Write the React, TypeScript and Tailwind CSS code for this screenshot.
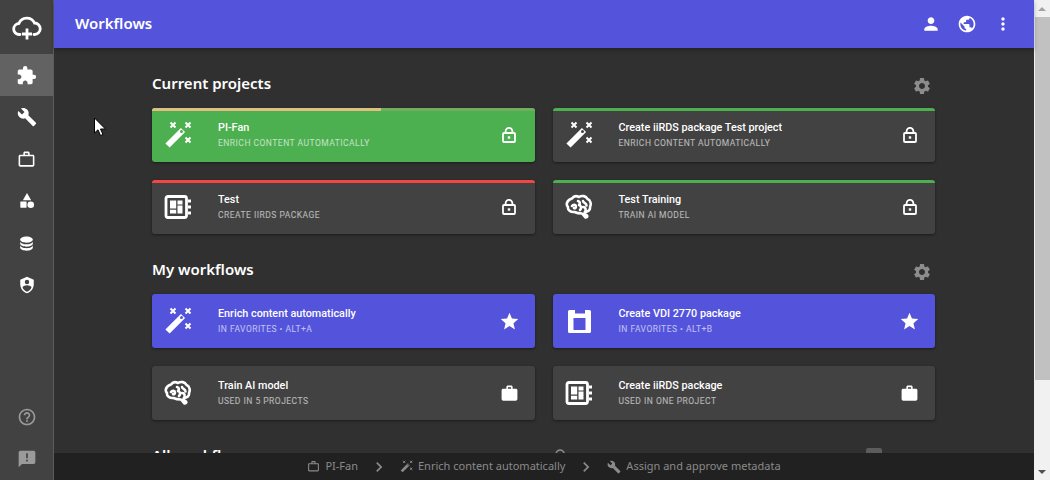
import React from 'react';
import {
  MdExtension, MdBuild, MdWorkOutline, MdWork, MdStar, MdSettings, MdPerson,
  MdPublic, MdMoreVert, MdHelpOutline, MdAnnouncement, MdChevronRight, MdSearch,
} from 'react-icons/md';

const CloudLogo = () => (
  <svg width="30" height="25" viewBox="0 0 30 25" fill="none" stroke="white" strokeWidth="2.800">
    <path d="M8 19.500H7.500a5.500 5.500 0 0 1-.6-11A8.500 8.500 0 0 1 22.500 8a5.700 5.700 0 0 1 0 11.500H22" strokeLinecap="round" />
    <path d="M15 13.500v11M10 19h10" />
  </svg>
);

const Wand = ({ size = 28 }: { size?: number }) => (
  <svg width={size} height={size} viewBox="0 0 28 28" fill="currentColor" className="text-inherit">
    <path fillRule="evenodd" d="M1.400 22.400L16.900 6.900L21.100 11.100L5.600 26.600ZM16 10.500a1.500 1.500 0 1 0 3 0a1.500 1.500 0 1 0-3 0Z" />
    <path d="M6.500 1.500l5 5M11.500 1.500l-5 5M21.500 1.500l5 5M26.500 1.500l-5 5M21.500 16.500l5 5M26.500 16.500l-5 5" stroke="currentColor" strokeWidth="2" fill="none" />
  </svg>
);

const Notebook = () => (
  <svg width="28" height="24" viewBox="0 0 28 24" fill="white">
    <rect x="2" y="1.500" width="20.500" height="21" rx="2" fill="none" stroke="white" strokeWidth="2.800" />
    <path d="M6 5.500h6.200v8H6zM13.500 5.500h5v4h-5zM13.500 10.500h5v8h-5zM6 14.800h6.200v3.700H6z" />
    <path d="M24 4.500h3v3h-3zM24 10.500h3v3h-3zM24 16.500h3v3h-3z" />
  </svg>
);

const Brain = () => (
  <svg width="28" height="26" viewBox="0 0 28 26" fill="none" stroke="white" strokeWidth="2.600" strokeLinecap="round" strokeLinejoin="round">
    <path d="M7 4.500C9 1.500 12 2 14 3C17 1 21 2 22.500 5C25.500 6 26.500 10 25 13C25.500 16 23 18 20.500 17.500C19.500 18 19.500 19 20 20L22 21.500C23 23 21 24 20 23L17 19.500C14 19.500 11.500 19 9.500 18C5.500 18.500 2.500 16 3 13C.5 10.500 2 6 7 4.500Z" />
    <path d="M7 12c1.500-2 4-1.500 4 .5s-1.500 2-2 1.500" />
    <path d="M13 7c2 .5 2.500 2.500 1 4c2 .5 3 3 1 5" />
    <path d="M18 7c0 2 3.500 2 3.500 4.500M18 13c2 0 3 1.500 2.500 3" />
  </svg>
);

const PackageIcon = () => (
  <svg width="23" height="23" viewBox="0 0 23 23" fill="white">
    <path fillRule="evenodd" d="M1.500 0H7V3.500H17V0H21.500A1.500 1.500 0 0 1 23 1.500V21.500A1.500 1.500 0 0 1 21.500 23H1.500A1.500 1.500 0 0 1 0 21.500V1.500A1.500 1.500 0 0 1 1.500 0ZM5.500 8V20H17.500V8Z" />
  </svg>
);

const Shapes = () => (
  <svg width="20" height="20" viewBox="0 0 24 24" fill="white">
    <path d="M12 2.500L17 11H7Z" />
    <rect x="4" y="12.500" width="7.500" height="7.500" rx="0.500" />
    <circle cx="16.500" cy="16.500" r="4" />
  </svg>
);

const Database = () => (
  <svg width="19" height="19" viewBox="0 0 24 24" fill="white">
    <path d="M12,3C7.58,3 4,4.79 4,7C4,9.21 7.58,11 12,11C16.42,11 20,9.21 20,7C20,4.79 16.42,3 12,3M4,9V12C4,14.21 7.58,16 12,16C16.42,16 20,14.21 20,12V9C20,11.21 16.42,13 12,13C7.58,13 4,11.21 4,9M4,14V17C4,19.21 7.58,21 12,21C16.42,21 20,19.21 20,17V14C20,16.21 16.42,18 12,18C7.58,18 4,16.21 4,14Z" />
  </svg>
);

const ShieldAccount = () => (
  <svg width="18" height="18" viewBox="0 0 24 24" fill="white">
    <path d="M12,1L3,5V11C3,16.55 6.84,21.74 12,23C17.16,21.74 21,16.55 21,11V5L12,1M12,5A3,3 0 0,1 15,8A3,3 0 0,1 12,11A3,3 0 0,1 9,8A3,3 0 0,1 12,5M17.13,17C15.92,18.85 14.11,20.24 12,20.92C9.89,20.24 8.08,18.85 6.87,17C6.53,16.5 6.24,16 6,15.47C6,13.82 8.71,12.47 12,12.47C15.29,12.47 18,13.79 18,15.47C17.76,16 17.47,16.5 17.13,17Z" />
  </svg>
);

const Lock = () => (
  <svg width="14" height="16" viewBox="0 0 14 16" fill="none" stroke="white" strokeWidth="1.800">
    <rect x="1" y="6" width="12" height="9" rx="1" />
    <path d="M3.600 6V4.200a3.400 3.400 0 0 1 6.800 0V6" />
    <rect x="5.800" y="9.300" width="2.400" height="2.400" fill="white" stroke="none" />
  </svg>
);

const SideItem = ({ children, active }: { children: React.ReactNode; active?: boolean }) => (
  <div className={`h-[42px] flex items-center justify-center text-white ${active ? 'bg-[#626262]' : ''}`}>
    {children}
  </div>
);

const Card = ({ icon, title, sub, right, className = 'bg-[#424242]', bar }: {
  icon: React.ReactNode;
  title: string;
  sub: string;
  right: React.ReactNode;
  className?: string;
  bar?: React.ReactNode;
}) => (
  <div className={`relative h-[54px] rounded-[3px] overflow-hidden shadow-[0_1px_3px_rgba(0,0,0,0.45)] flex items-center ${className}`}>
    {bar}
    <div className="w-[66px] pl-[12px] flex items-center shrink-0 text-white">{icon}</div>
    <div className="flex-1 min-w-0 pb-[1px] font-['Roboto',sans-serif]">
      <div className="text-[10.800px] leading-[16px] font-medium text-white">{title}</div>
      <div className="mt-[1px] text-[8.500px] leading-[12px] uppercase tracking-[0.480px] text-white/65">{sub}</div>
    </div>
    <div className="w-[52px] pl-[1px] flex items-center justify-center shrink-0 text-white">{right}</div>
  </div>
);

const TopBar = ({ color }: { color: string }) => (
  <div className={`absolute top-0 left-0 right-0 h-[3px] ${color}`} />
);

const Section = ({ title, children }: { title: string; children: React.ReactNode }) => (
  <section className="mb-6">
    <div className="h-6 mb-3 flex items-center justify-between">
      <h2 className="text-[15px] pb-[2px] font-semibold text-white">{title}</h2>
      <MdSettings size={20} className="text-[#8c8c8c] mr-[3px] mt-1" />
    </div>
    <div className="grid grid-cols-2 gap-[18px]">{children}</div>
  </section>
);

const Crumb = ({ icon, label }: { icon: React.ReactNode; label: string }) => (
  <span className="flex items-center gap-[5px]">
    {icon}
    <span>{label}</span>
  </span>
);

export default function App() {
  return (
    <div className="h-screen flex overflow-hidden bg-[#303030] font-['Noto_Sans',sans-serif]">
      <aside className="w-[54px] shrink-0 flex flex-col bg-[#424242] border-r border-[#5c5c5c]">
        <div className="h-[54px] flex items-center justify-center pt-[1px]"><CloudLogo /></div>
        <SideItem active><MdExtension size={21} /></SideItem>
        <SideItem><MdBuild size={20} /></SideItem>
        <SideItem><MdWorkOutline size={19} /></SideItem>
        <SideItem><Shapes /></SideItem>
        <SideItem><Database /></SideItem>
        <SideItem><ShieldAccount /></SideItem>
        <div className="mt-auto">
          <SideItem><MdHelpOutline size={20} className="text-[#9a9a9a]" /></SideItem>
          <SideItem><MdAnnouncement size={20} className="text-[#9a9a9a]" /></SideItem>
        </div>
      </aside>

      <div className="relative flex-1 min-w-0 flex flex-col">
        <header className="h-12 shrink-0 z-10 bg-[#5353db] shadow-[0_2px_4px_rgba(0,0,0,0.3)] flex items-center pl-[21px] pr-[21px]">
          <h1 className="text-[15px] pb-[2px] font-semibold text-white">Workflows</h1>
          <div className="ml-auto flex items-center gap-[16px] text-white">
            <MdPerson size={20} />
            <MdPublic size={20} />
            <MdMoreVert size={20} />
          </div>
        </header>
        <main className="flex-1 overflow-hidden pt-6">
          <div className="w-[783px] ml-[98px]">
            <Section title="Current projects">
              <Card
                className="bg-[#4caf50]"
                icon={<Wand />}
                title="PI-Fan"
                sub="Enrich content automatically"
                right={<Lock />}
                bar={
                  <div className="absolute top-0 left-0 right-0 h-[3px] bg-[#72ae5f]">
                    <div className="h-full w-[229px] bg-[#dfc081]" />
                  </div>
                }
              />
              <Card
                icon={<Wand />}
                title="Create iiRDS package Test project"
                sub="Enrich content automatically"
                right={<Lock />}
                bar={<TopBar color="bg-[#4caf50]" />}
              />
              <Card
                icon={<Notebook />}
                title="Test"
                sub="Create iiRDS package"
                right={<Lock />}
                bar={<TopBar color="bg-[#f44545]" />}
              />
              <Card
                icon={<Brain />}
                title="Test Training"
                sub="Train AI model"
                right={<Lock />}
                bar={<TopBar color="bg-[#4caf50]" />}
              />
            </Section>
            <Section title="My workflows">
              <Card
                className="bg-[#5353db]"
                icon={<Wand />}
                title="Enrich content automatically"
                sub="In favorites • Alt+A"
                right={<MdStar size={21} />}
              />
              <Card
                className="bg-[#5353db]"
                icon={<span className="pl-[3px]"><PackageIcon /></span>}
                title="Create VDI 2770 package"
                sub="In favorites • Alt+B"
                right={<MdStar size={21} />}
              />
              <Card
                icon={<Brain />}
                title="Train AI model"
                sub="Used in 5 projects"
                right={<MdWork size={19} />}
              />
              <Card
                icon={<Notebook />}
                title="Create iiRDS package"
                sub="Used in one project"
                right={<MdWork size={19} />}
              />
            </Section>
            <div className="h-6 grid grid-cols-2 gap-[18px] items-center">
              <h2 className="text-[15px] pb-[2px] font-semibold text-white">All workflows</h2>
              <div className="flex items-center">
                <MdSearch size={18} className="text-[#8c8c8c]" />
                <span className="ml-auto mr-[53px] size-4 rounded-[2px] bg-[#5c5c5c]" />
              </div>
            </div>
          </div>
        </main>

        {/* breadcrumb sits over the scrolled content */}
        <footer className="absolute bottom-0 left-0 right-0 h-[27px] bg-[#212121] flex items-center justify-center gap-[11px] text-[11px] text-[#8a8a8a]">
          <Crumb icon={<MdWorkOutline size={13} />} label="PI-Fan" />
          <MdChevronRight size={20} />
          <Crumb icon={<Wand size={13} />} label="Enrich content automatically" />
          <MdChevronRight size={20} />
          <Crumb icon={<MdBuild size={14} />} label="Assign and approve metadata" />
        </footer>

        {/* mouse pointer caught in the capture */}
        <svg className="absolute left-[39px] top-[117px]" width="14" height="20" viewBox="0 0 14 20">
          <path d="M1.500 1V16L5 12.800L7.500 18.500L10 17.500L7.500 12H12.500Z" fill="white" stroke="black" strokeWidth="1" />
        </svg>
      </div>

      <div className="w-[16px] shrink-0 bg-[#f1f1f1] flex flex-col items-center">
        <div className="h-[17px] flex items-center justify-center">
          <div className="w-0 h-0 border-x-[4px] border-x-transparent border-b-[4px] border-b-[#a3a3a3]" />
        </div>
        <div className="h-[363px] w-[15px] bg-[#c1c1c1]" />
        <div className="mt-auto h-[17px] flex items-center justify-center">
          <div className="w-0 h-0 border-x-[4px] border-x-transparent border-t-[4px] border-t-[#505050]" />
        </div>
      </div>
    </div>
  );
}
